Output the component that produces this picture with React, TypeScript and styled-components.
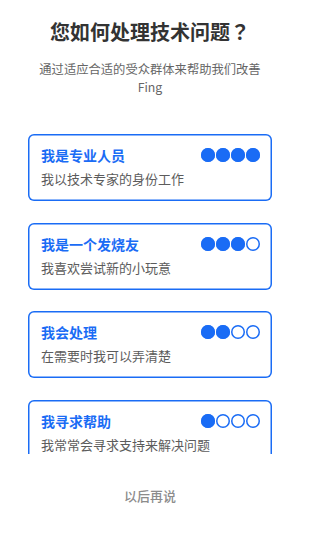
import { createGlobalStyle } from 'styled-components';
import styled from 'styled-components';

const GlobalStyle = createGlobalStyle`
  html, body {
    margin: 0;
    padding: 0;
    background: #ffffff;
  }
  body {
    font-family: "Noto Sans CJK SC", "Noto Sans", sans-serif;
  }
  * {
    box-sizing: border-box;
  }
`;

const BLUE = '#1a6cf5';

const Screen = styled.div`
  width: 300px;
  height: 534px;
  display: flex;
  flex-direction: column;
  background: #fff;
  overflow: hidden;
`;

const Header = styled.header`
  padding: 18px 30px 0;
  text-align: center;
`;

const Title = styled.h1`
  margin: 0 -10px;
  font-family: "Noto Sans CJK TC", "Noto Sans CJK SC", sans-serif;
  font-size: 20px;
  line-height: 28px;
  font-weight: 700;
  color: #333;
`;

const Subtitle = styled.p`
  margin: 14px -4px 0;
  font-size: 12.3px;
  line-height: 18px;
  color: #666;
`;

const OptionList = styled.ul`
  list-style: none;
  margin: 0;
  padding: 38px 28px 0;
  flex: 1;
  overflow: hidden;
  display: flex;
  flex-direction: column;
  gap: 21.5px;
`;

const Option = styled.li`
  flex-shrink: 0;
  border-radius: 6px;
  box-shadow: inset 0 0 0 1.5px ${BLUE};
  padding: 11px 12px 13px 13px;
  display: flex;
  flex-direction: column;
  gap: 5px;
  cursor: pointer;
`;

const OptionHead = styled.div`
  display: flex;
  align-items: center;
  justify-content: space-between;
`;

const OptionTitle = styled.span`
  font-size: 14px;
  line-height: 20px;
  font-weight: 700;
  color: ${BLUE};
`;

const OptionDesc = styled.span`
  font-size: 13px;
  line-height: 18px;
  color: #5c5c5c;
`;

const Dots = styled.div`
  display: flex;
  gap: 1px;
`;

const Dot = styled.span<{ $filled: boolean }>`
  width: 14px;
  height: 14px;
  border-radius: 50%;
  box-shadow: inset 0 0 0 1.5px ${BLUE};
  background: ${(p) => (p.$filled ? BLUE : '#fff')};
`;

const Footer = styled.footer`
  height: 80px;
  flex-shrink: 0;
  padding-top: 28px;
  text-align: center;
`;

const LaterButton = styled.button`
  border: none;
  background: none;
  padding: 0;
  font-family: inherit;
  font-size: 13px;
  line-height: 18px;
  font-weight: 500;
  color: #8c8c8c;
`;

interface ILevel {
  id: string;
  title: string;
  desc: string;
  level: number;
}

const levels: ILevel[] = [
  { id: 'pro', title: '我是专业人员', desc: '我以技术专家的身份工作', level: 4 },
  { id: 'geek', title: '我是一个发烧友', desc: '我喜欢尝试新的小玩意', level: 3 },
  { id: 'handle', title: '我会处理', desc: '在需要时我可以弄清楚', level: 2 },
  { id: 'help', title: '我寻求帮助', desc: '我常常会寻求支持来解决问题', level: 1 },
];

function App() {
  return (
    <>
      <GlobalStyle />
      <Screen>
        <Header>
          <Title>您如何处理技术问题？</Title>
          <Subtitle>通过适应合适的受众群体来帮助我们改善 Fing</Subtitle>
        </Header>
        <OptionList>
          {levels.map((item) => (
            <Option key={item.id}>
              <OptionHead>
                <OptionTitle>{item.title}</OptionTitle>
                <Dots>
                  {[0, 1, 2, 3].map((i) => (
                    <Dot key={i} $filled={i < item.level} />
                  ))}
                </Dots>
              </OptionHead>
              <OptionDesc>{item.desc}</OptionDesc>
            </Option>
          ))}
        </OptionList>
        <Footer>
          <LaterButton>以后再说</LaterButton>
        </Footer>
      </Screen>
    </>
  );
}

export default App;
